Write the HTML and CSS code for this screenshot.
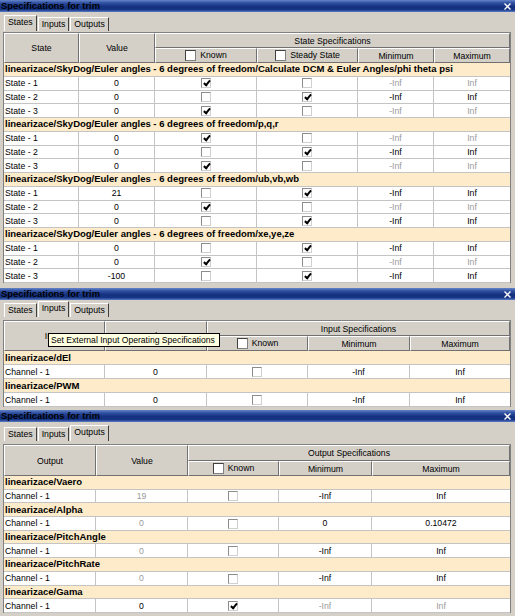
FILE: index.html
```html
<!DOCTYPE html>
<html>
<head>
<meta charset="utf-8">
<link rel="stylesheet" href="styles.css">
</head>
<body>
<div class="panel p1">
  <div class="titlebar"><span class="ttl">Specifications for trim</span><svg class="close" viewBox="0 0 7 7"><path d="M0.5 0.5L6.5 6.5M6.5 0.5L0.5 6.5" stroke="#fff" stroke-width="1.4"/></svg></div>
  <div class="tabs"><span class="tab sel">States</span><span class="tab">Inputs</span><span class="tab">Outputs</span></div>
  <div class="frame">
    <table class="grid">
      <colgroup><col><col><col><col><col><col></colgroup>
      <thead>
        <tr><th rowspan="2">State</th><th rowspan="2">Value</th><th colspan="4">State Specifications</th></tr>
        <tr><th><span class="hcb"></span>Known</th><th><span class="hcb"></span>Steady State</th><th>Minimum</th><th>Maximum</th></tr>
      </thead>
      <tbody>
        <tr class="grp"><td colspan="6">linearizace/SkyDog/Euler angles - 6 degrees of freedom/Calculate DCM &amp; Euler Angles/phi theta psi</td></tr>
        <tr><td class="n">State - 1</td><td>0</td><td><span class="cb on"></span></td><td><span class="cb"></span></td><td class="g">-Inf</td><td class="g">Inf</td></tr>
        <tr><td class="n">State - 2</td><td>0</td><td><span class="cb"></span></td><td><span class="cb on"></span></td><td>-Inf</td><td>Inf</td></tr>
        <tr><td class="n">State - 3</td><td>0</td><td><span class="cb on"></span></td><td><span class="cb"></span></td><td class="g">-Inf</td><td class="g">Inf</td></tr>
        <tr class="grp"><td colspan="6">linearizace/SkyDog/Euler angles - 6 degrees of freedom/p,q,r</td></tr>
        <tr><td class="n">State - 1</td><td>0</td><td><span class="cb on"></span></td><td><span class="cb"></span></td><td class="g">-Inf</td><td class="g">Inf</td></tr>
        <tr><td class="n">State - 2</td><td>0</td><td><span class="cb"></span></td><td><span class="cb on"></span></td><td>-Inf</td><td>Inf</td></tr>
        <tr><td class="n">State - 3</td><td>0</td><td><span class="cb on"></span></td><td><span class="cb"></span></td><td class="g">-Inf</td><td class="g">Inf</td></tr>
        <tr class="grp"><td colspan="6">linearizace/SkyDog/Euler angles - 6 degrees of freedom/ub,vb,wb</td></tr>
        <tr><td class="n">State - 1</td><td>21</td><td><span class="cb"></span></td><td><span class="cb on"></span></td><td>-Inf</td><td>Inf</td></tr>
        <tr><td class="n">State - 2</td><td>0</td><td><span class="cb on"></span></td><td><span class="cb"></span></td><td class="g">-Inf</td><td class="g">Inf</td></tr>
        <tr><td class="n">State - 3</td><td>0</td><td><span class="cb"></span></td><td><span class="cb on"></span></td><td>-Inf</td><td>Inf</td></tr>
        <tr class="grp"><td colspan="6">linearizace/SkyDog/Euler angles - 6 degrees of freedom/xe,ye,ze</td></tr>
        <tr><td class="n">State - 1</td><td>0</td><td><span class="cb"></span></td><td><span class="cb on"></span></td><td>-Inf</td><td>Inf</td></tr>
        <tr><td class="n">State - 2</td><td>0</td><td><span class="cb on"></span></td><td><span class="cb"></span></td><td class="g">-Inf</td><td class="g">Inf</td></tr>
        <tr><td class="n">State - 3</td><td>-100</td><td><span class="cb"></span></td><td><span class="cb on"></span></td><td>-Inf</td><td>Inf</td></tr>
      </tbody>
    </table>
  </div>
</div>

<div class="panel p2">
  <div class="titlebar"><span class="ttl">Specifications for trim</span><svg class="close" viewBox="0 0 7 7"><path d="M0.5 0.5L6.5 6.5M6.5 0.5L0.5 6.5" stroke="#fff" stroke-width="1.4"/></svg></div>
  <div class="tabs"><span class="tab">States</span><span class="tab sel">Inputs</span><span class="tab">Outputs</span></div>
  <div class="frame">
    <table class="grid">
      <colgroup><col><col><col><col><col></colgroup>
      <thead>
        <tr><th rowspan="2">Input</th><th rowspan="2">Value</th><th colspan="3">Input Specifications</th></tr>
        <tr><th><span class="hcb"></span>Known</th><th>Minimum</th><th>Maximum</th></tr>
      </thead>
      <tbody>
        <tr class="grp"><td colspan="5">linearizace/dEl</td></tr>
        <tr><td class="n">Channel - 1</td><td>0</td><td><span class="cb"></span></td><td>-Inf</td><td>Inf</td></tr>
        <tr class="grp"><td colspan="5">linearizace/PWM</td></tr>
        <tr><td class="n">Channel - 1</td><td>0</td><td><span class="cb"></span></td><td>-Inf</td><td>Inf</td></tr>
      </tbody>
    </table>
  </div>
  <div class="tip">Set External Input Operating Specifications</div>
</div>

<div class="panel p3">
  <div class="titlebar"><span class="ttl">Specifications for trim</span><svg class="close" viewBox="0 0 7 7"><path d="M0.5 0.5L6.5 6.5M6.5 0.5L0.5 6.5" stroke="#fff" stroke-width="1.4"/></svg></div>
  <div class="tabs"><span class="tab">States</span><span class="tab">Inputs</span><span class="tab sel">Outputs</span></div>
  <div class="frame">
    <table class="grid">
      <colgroup><col><col><col><col><col></colgroup>
      <thead>
        <tr><th rowspan="2">Output</th><th rowspan="2">Value</th><th colspan="3">Output Specifications</th></tr>
        <tr><th><span class="hcb"></span>Known</th><th>Minimum</th><th>Maximum</th></tr>
      </thead>
      <tbody>
        <tr class="grp"><td colspan="5">linearizace/Vaero</td></tr>
        <tr><td class="n">Channel - 1</td><td class="g">19</td><td><span class="cb"></span></td><td>-Inf</td><td>Inf</td></tr>
        <tr class="grp"><td colspan="5">linearizace/Alpha</td></tr>
        <tr><td class="n">Channel - 1</td><td class="g">0</td><td><span class="cb"></span></td><td>0</td><td>0.10472</td></tr>
        <tr class="grp"><td colspan="5">linearizace/PitchAngle</td></tr>
        <tr><td class="n">Channel - 1</td><td class="g">0</td><td><span class="cb"></span></td><td>-Inf</td><td>Inf</td></tr>
        <tr class="grp"><td colspan="5">linearizace/PitchRate</td></tr>
        <tr><td class="n">Channel - 1</td><td class="g">0</td><td><span class="cb"></span></td><td>-Inf</td><td>Inf</td></tr>
        <tr class="grp"><td colspan="5">linearizace/Gama</td></tr>
        <tr><td class="n">Channel - 1</td><td>0</td><td><span class="cb on"></span></td><td class="g">-Inf</td><td class="g">Inf</td></tr>
      </tbody>
    </table>
  </div>
</div>
</body>
</html>
```

FILE: styles.css
```css
* { box-sizing: border-box; }
html, body { margin: 0; padding: 0; }
body {
  width: 515px;
  height: 616px;
  overflow: hidden;
  background: #d4d0c8;
  font-family: "Liberation Sans", Arial, sans-serif;
  font-size: 8.7px;
  color: #000;
}
.panel { background: #d4d0c8; position: relative; overflow: hidden; }
.p1 { height: 288px; }
.p2 { height: 122px; }
.p3 { height: 206px; }

.titlebar {
  height: 12px;
  display: flex;
  align-items: center;
  justify-content: space-between;
  padding: 0 4px 0 1px;
  background: linear-gradient(to bottom, #6584c8 0%, #2e4fa0 25%, #15317f 55%, #163585 80%, #5b7cc6 100%);
}
.ttl { font-weight: bold; font-size: 9.4px; line-height: 12px; color: #000; }
.close { width: 7px; height: 7px; display: block; }

.tabs {
  height: 20px;
  display: flex;
  align-items: flex-end;
  gap: 1px;
  padding: 0 0 1px 4px;
}
.p2 .tabs { padding-bottom: 3px; }
.p3 .tabs { height: 22px; padding-bottom: 3px; }
.tab {
  height: 14px;
  padding: 0 3px;
  border-top: 1px solid #fff;
  border-left: 1px solid #fff;
  border-right: 1px solid #404040;
  line-height: 12px;
  white-space: nowrap;
}
.tab.sel { height: 16px; line-height: 12px; }

.frame {
  margin-left: 3px;
  width: 508px;
  border: 1px solid #808080;
  border-bottom: none;
}
.grid {
  border-collapse: separate;
  border-spacing: 0;
  table-layout: fixed;
  width: 506px;
}
.p1 col:nth-child(1) { width: 75px; }
.p1 col:nth-child(2) { width: 76px; }
.p1 col:nth-child(3) { width: 102px; }
.p1 col:nth-child(4) { width: 101px; }
.p1 col:nth-child(5) { width: 76px; }
.p1 col:nth-child(6) { width: 76px; }
.p2 col:nth-child(1) { width: 101px; }
.p2 col:nth-child(2) { width: 102px; }
.p2 col:nth-child(3) { width: 101px; }
.p2 col:nth-child(4) { width: 102px; }
.p2 col:nth-child(5) { width: 100px; }
.p3 col:nth-child(1) { width: 92px; }
.p3 col:nth-child(2) { width: 92px; }
.p3 col:nth-child(3) { width: 91px; }
.p3 col:nth-child(4) { width: 93px; }
.p3 col:nth-child(5) { width: 138px; }

.grid thead tr { height: 15px; }
.p3 .grid thead tr:first-child { height: 16px; }
.p1 .grid tbody tr { height: 13.75px; }
.p2 .grid tbody tr { height: 14px; }
.p3 .grid tbody tr { height: 13.7px; }

.grid th {
  padding: 0;
  font-weight: normal;
  background: #d4d0c8;
  border-top: 1px solid #fff;
  border-left: 1px solid #fff;
  border-right: 1px solid #707070;
  border-bottom: 1px solid #707070;
  text-align: center;
  line-height: 10px;
  white-space: nowrap;
  overflow: hidden;
}
.grid td {
  padding: 0;
  line-height: 10px;
  white-space: nowrap;
  overflow: hidden;
  background: #fff;
  text-align: center;
  border-right: 1px solid #c4c4c4;
  border-bottom: 1px solid #c4c4c4;
}
.grid td:last-child { border-right: none; }
.grid td.n { text-align: left; padding-left: 1px; }
.grid tr.grp td {
  background: #fdebc9;
  font-weight: bold;
  font-size: 9.5px;
  text-align: left;
  padding-left: 1px;
}
.grid td.g { color: #9a9a9a; }

.cb {
  display: inline-block;
  position: relative;
  width: 10px;
  height: 10px;
  vertical-align: middle;
  background: #fff;
  border: 1px solid;
  border-color: #8c8c8c #d0d0d0 #d0d0d0 #8c8c8c;
}
.cb.on::after {
  content: "";
  position: absolute;
  left: 3px;
  top: 0px;
  width: 2px;
  height: 5px;
  border: solid #000;
  border-width: 0 2px 2px 0;
  transform: rotate(40deg);
}
.hcb {
  display: inline-block;
  width: 11px;
  height: 11px;
  margin-right: 4px;
  vertical-align: middle;
  background: #fff;
  border: 1px solid;
  border-color: #404040 #808080 #808080 #404040;
}

.tip {
  position: absolute;
  left: 48px;
  top: 45px;
  width: 172px;
  height: 14px;
  padding-left: 2px;
  border: 1px solid #000;
  background: #ffffe1;
  line-height: 12px;
  font-size: 8.6px;
  white-space: nowrap;
}
```
